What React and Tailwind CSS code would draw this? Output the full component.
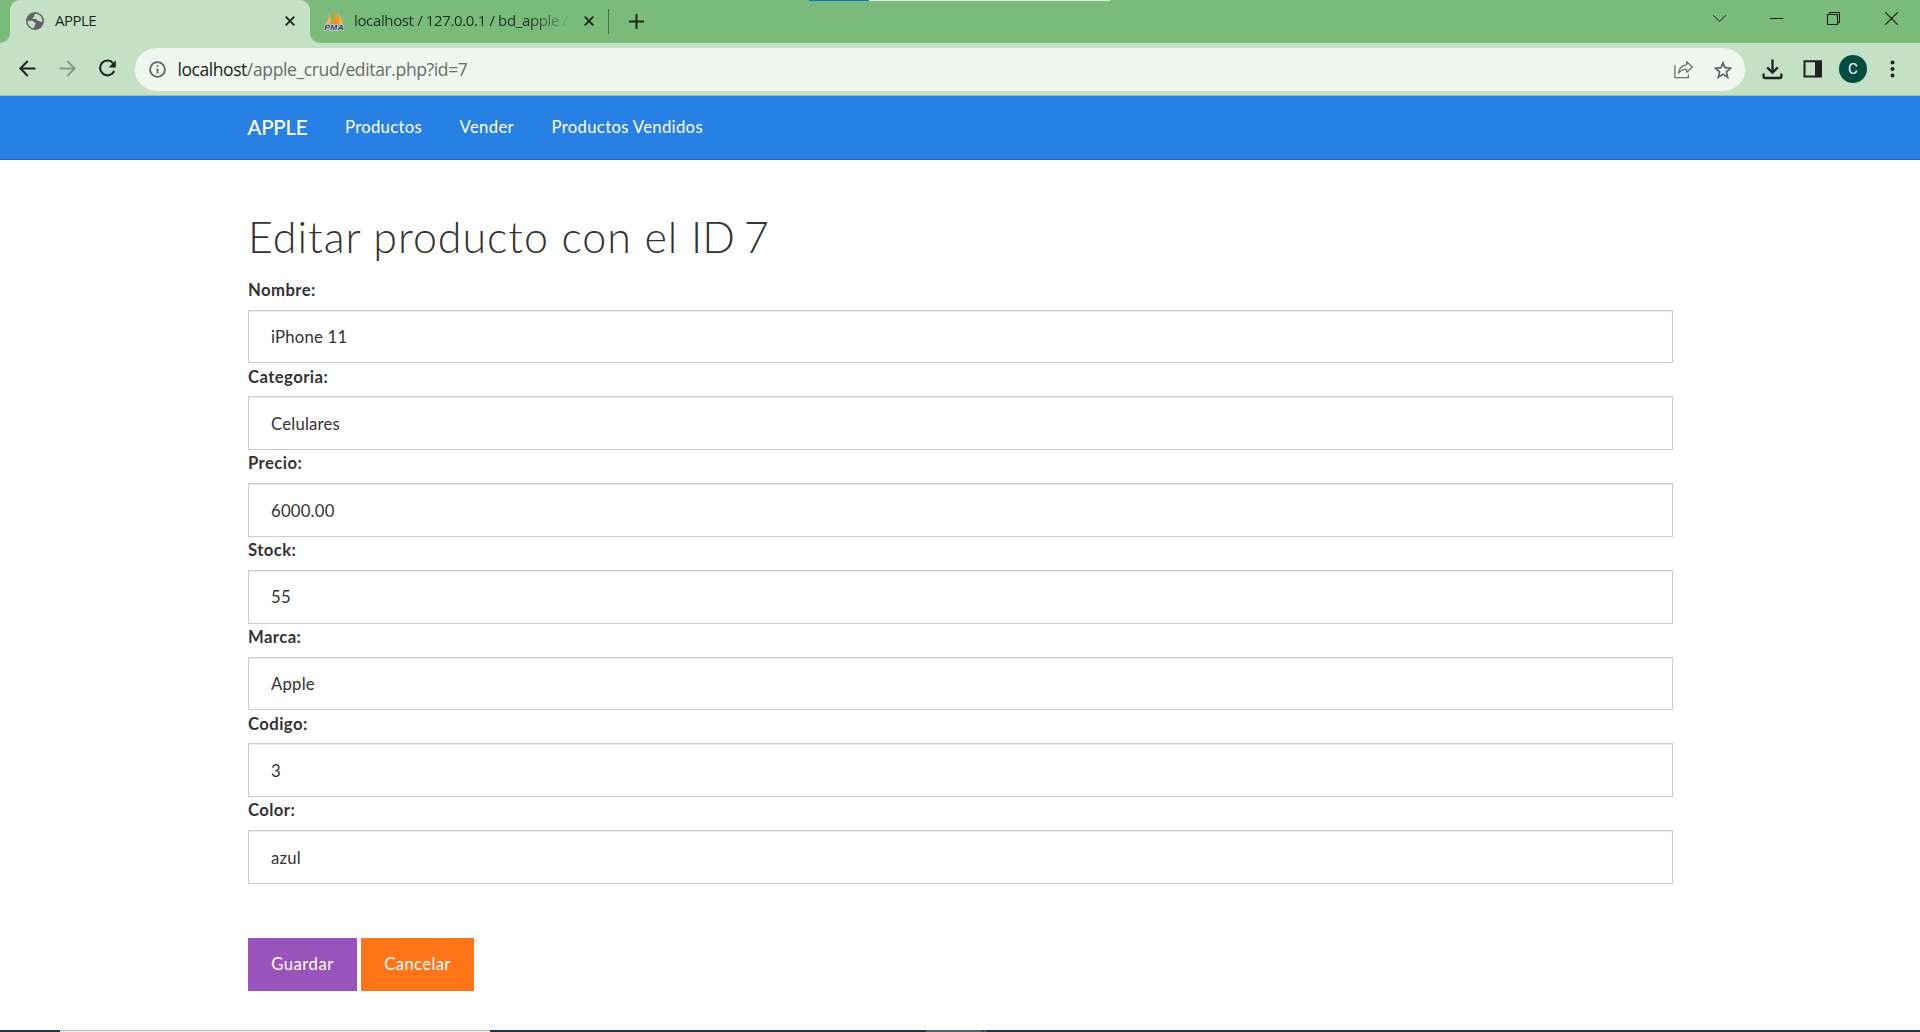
import React from 'react';

const fields = [
  ['Nombre:', 'iPhone 11'],
  ['Categoria:', 'Celulares'],
  ['Precio:', '6000.00'],
  ['Stock:', '55'],
  ['Marca:', 'Apple'],
  ['Codigo:', '3'],
  ['Color:', 'azul'],
];

function Globe() {
  return (
    <svg className="ml-[15px] size-[20px] shrink-0" viewBox="0 0 20 20">
      <circle cx="10" cy="10" r="9" fill="#5f6368" />
      <path
        d="M2.7 9.4 C4.5 9.8 6 9.6 7.6 9.8 C8.6 10.2 8.6 11.3 9.7 11.5 C11 11.8 11.2 12.6 10.2 13.4 C9.4 14 9.8 15.6 8.8 17.2 C5 16.6 2.4 13.4 2.7 9.4 Z"
        fill="#c5e1c5"
      />
      <path
        d="M11.4 2.8 C9.6 3.1 8.8 4 9.2 5.1 C9.5 5.9 8.7 6.3 8 6.6 C7.2 7 7.5 7.9 8.4 8 C10 8.2 11.2 7.7 11.9 8.8 C12.4 9.8 13.5 10.1 14.5 10 C15.5 10 15.6 11.4 17.2 11 C17.8 7 15.4 3.6 11.4 2.8 Z"
        fill="#c5e1c5"
      />
    </svg>
  );
}

function PmaLogo() {
  return (
    <svg className="size-[20px] shrink-0" viewBox="0 0 20 20">
      <path d="M1.3 13 Q5 9 5.4 1.8 Q7 8 6.4 13 Z" fill="#f7b35a" />
      <path d="M7.2 13 Q11 7 10.6 0.5 Q15 7 14.2 13 Z" fill="#f99417" />
      <path d="M14.8 13 Q15.4 7 13.6 2.6 Q18 7 19.2 13 Z" fill="#fbab48" />
      <text
        x="0.3"
        y="19"
        textLength="19.4"
        lengthAdjust="spacingAndGlyphs"
        fontFamily="Liberation Sans, sans-serif"
        fontWeight="bold"
        fontStyle="italic"
        fontSize="7.6"
        fill="#33346b"
        stroke="#dfe6e0"
        strokeWidth="1"
        paintOrder="stroke"
      >
        PMA
      </text>
    </svg>
  );
}

function CloseMark() {
  return (
    <svg className="size-[10px] shrink-0" viewBox="0 0 10 10" stroke="#1d2420" strokeWidth="1.9" fill="none">
      <path d="M0.7 0.7 L9.3 9.3 M9.3 0.7 L0.7 9.3" />
    </svg>
  );
}

function TabStrip() {
  return (
    <div className="relative flex h-[43px] shrink-0 bg-[#7abb7b]">
      <div className="w-[10px] bg-[#c5e1c5]">
        <div className="h-full rounded-br-[10px] bg-[#7abb7b]" />
      </div>
      <div className="flex w-[300px] items-center rounded-t-[10px] bg-[#c5e1c5] pb-px">
        <Globe />
        <span className="ml-[10px] pb-[2px] text-[15px] leading-5 tracking-[-0.5px] text-[#1d2420]">APPLE</span>
        <span className="mr-[15px] ml-auto flex">
          <CloseMark />
        </span>
      </div>
      <div className="w-[10px] bg-[#c5e1c5]">
        <div className="h-full rounded-bl-[10px] bg-[#7abb7b]" />
      </div>
      <div className="flex items-center pb-px pl-[4px]">
        <PmaLogo />
        <span className="ml-[10px] w-[216px] pb-[2px] text-[15px] leading-5 tracking-[-0.36px] whitespace-nowrap text-[#1d3020] [mask-image:linear-gradient(to_right,#000_175px,transparent_220px)]">
          localhost / 127.0.0.1 / bd_apple /
        </span>
        <span className="ml-[14px] flex">
          <CloseMark />
        </span>
        <span className="ml-[14px] h-[25px] w-px bg-[#4a6f4b]" />
        <svg className="ml-[20px] size-[15px]" viewBox="0 0 15 15" stroke="#18271a" strokeWidth="2">
          <path d="M7.5 0 V15 M0 7.5 H15" />
        </svg>
      </div>
      <div className="mr-[22px] ml-auto flex h-[37px] items-center text-[#0c130c]">
        <svg className="size-[13px]" viewBox="0 0 13 13" stroke="currentColor" fill="none" strokeWidth="1">
          <path d="M0.3 3.3 L6.5 9.5 L12.7 3.3" />
        </svg>
        <svg className="ml-[44px] size-[13px]" viewBox="0 0 13 13" stroke="currentColor" fill="none">
          <path d="M0 6.5 H13" />
        </svg>
        <svg className="ml-[44px] size-[13px]" viewBox="0 0 13 13" stroke="currentColor" fill="none">
          <path d="M0.5 2.5 H10.5 V12.5 H0.5 Z M2.5 2.5 V0.5 H12.5 V10.5 H10.5" />
        </svg>
        <svg className="ml-[45px] size-[13px]" viewBox="0 0 13 13" stroke="currentColor" fill="none" strokeWidth="1.1">
          <path d="M0.3 0.3 L12.7 12.7 M12.7 0.3 L0.3 12.7" />
        </svg>
      </div>
      <div className="absolute top-0 left-[809px] flex h-px w-[301px] bg-[#e6e6e6]">
        <div className="w-[60px] bg-[#0078d7]" />
      </div>
    </div>
  );
}

function Toolbar() {
  return (
    <div className="flex h-[53px] shrink-0 items-start border-b border-[#a5bfa6] bg-[#c5e1c5] pt-[5px]">
      <div className="flex h-[43px] items-center pb-[2px]">
        <svg className="ml-[19px] size-[17px]" viewBox="0 0 17 17" stroke="#202124" fill="none" strokeWidth="2">
          <path d="M16.5 8.5 H1.8 M8.7 1 L1.4 8.5 L8.7 16" />
        </svg>
        <svg className="ml-[23px] size-[17px]" viewBox="0 0 17 17" stroke="#869a87" fill="none" strokeWidth="2">
          <path d="M0.5 8.5 H15.2 M8.3 1 L15.6 8.5 L8.3 16" />
        </svg>
        <svg className="ml-[22px] size-[19px]" viewBox="0 0 19 19" fill="none">
          <path d="M15.2 4.3 A7.4 7.4 0 1 0 16.2 12" stroke="#202124" strokeWidth="2.1" />
          <path d="M17.8 1.2 V8.4 H10.6 Z" fill="#202124" />
        </svg>
      </div>
      <div className="ml-[18px] flex h-[43px] w-[1610px] items-center rounded-full bg-[#f0f7f0]">
        <svg className="ml-[14px] size-[17px]" viewBox="0 0 17 17" fill="none">
          <circle cx="8.5" cy="8.5" r="7.4" stroke="#5f6368" strokeWidth="1.8" />
          <path d="M8.5 7.4 V12.6 M8.5 4.3 V6.1" stroke="#5f6368" strokeWidth="1.8" />
        </svg>
        <span className="ml-[11.5px] pb-px text-[17.5px] leading-6 tracking-[-0.36px] text-[#676d68]">
          <span className="tracking-[-0.44px] text-[#202124]">localhost</span>/apple_crud/editar.php?id=7
        </span>
        <svg className="mr-[21px] ml-auto size-[19px]" viewBox="0 0 19 19" stroke="#6b706c" fill="none" strokeWidth="1.3">
          <path d="M0.9 5.2 V17.6 H14.4 V14.6" />
          <path d="M12.7 1.6 L18.3 7 L12.7 12.4 V9.4 C8.8 9.2 6.6 10.2 4.4 13 C5 8.6 7.6 5.2 12.7 4.8 Z" strokeLinejoin="round" />
        </svg>
        <svg className="mr-[13.5px] size-[18px]" viewBox="0 0 18 18" stroke="#5f6368" fill="none" strokeWidth="1.7">
          <path d="M9 1.9 L11 6.7 L16.6 7.2 L12.4 10.8 L13.7 16.3 L9 13.3 L4.3 16.3 L5.6 10.8 L1.4 7.2 L7 6.7 Z" />
        </svg>
      </div>
      <div className="flex h-[43px] items-center pb-px">
        <svg className="ml-[17px] size-[21px]" viewBox="0 0 21 21" fill="none" stroke="#202124" strokeWidth="2.3">
          <path d="M10.5 0.5 V13 M5.2 8.4 L10.5 13.7 L15.8 8.4" />
          <path d="M1.6 14.6 V17.6 Q1.6 19 3 19 H18 Q19.4 19 19.4 17.6 V14.6" />
        </svg>
        <svg className="ml-[20px] size-[20px]" viewBox="0 0 20 20">
          <path d="M1.5 2.2 H18 V17.6 H1.5 Z" fill="none" stroke="#202124" strokeWidth="2" />
          <path d="M12 2 H18 V18 H12 Z" fill="#202124" />
        </svg>
        <div className="ml-[16px] flex size-[28px] items-center justify-center rounded-full bg-[#004d40] font-['Roboto',sans-serif] text-[15px] leading-none text-white">
          C
        </div>
        <svg className="ml-[23px] h-[18px] w-[5px]" viewBox="0 0 5 18" fill="#202124">
          <circle cx="2.5" cy="2.5" r="2" />
          <circle cx="2.5" cy="9" r="2" />
          <circle cx="2.5" cy="15.5" r="2" />
        </svg>
      </div>
    </div>
  );
}

function Navbar() {
  return (
    <nav className="flex h-16 shrink-0 items-center border-b border-[#1967be] bg-[#2780e3] pb-px pl-[247.5px] text-[16.7px] leading-6 text-white">
      <a className="w-[97.5px] text-[20.5px] tracking-[-0.2px] [-webkit-text-stroke:0.2px_#fff]">APPLE</a>
      <a className="w-[114.5px] pb-px tracking-[0.3px]">Productos</a>
      <a className="w-[92px] pb-px tracking-[0.35px]">Vender</a>
      <a className="pb-px tracking-[0.33px]">Productos Vendidos</a>
    </nav>
  );
}

export default function App() {
  return (
    <div className="flex h-[1032px] w-[1920px] flex-col overflow-hidden bg-white font-['Open_Sans',sans-serif]">
      <TabStrip />
      <Toolbar />
      <div className="flex min-h-0 flex-1 flex-col font-['Lato',sans-serif] text-[16.7px] text-[#333333]">
        <Navbar />
        <main className="mt-[49px] ml-[248px] w-[1425px]">
          <h1 className="mb-[11.5px] h-14 text-[43px] leading-[56px] font-light tracking-[0.95px]">
            Editar producto con el <span className="tracking-[0.2px] [word-spacing:-3px]">ID 7</span>
          </h1>
          {fields.map(([label, value]) => (
            <div key={label} className="flex h-[86.75px] flex-col">
              <label className="h-[33.1px] pt-[0.4px] leading-[26px] font-bold tracking-[0.42px]">{label}</label>
              <input
                defaultValue={value}
                className="min-h-0 flex-1 border border-[#cccccc] px-[22px] pt-[2.6px] tracking-[0.22px] text-[#333333] shadow-[inset_0_1px_1px_rgba(0,0,0,0.075)]"
              />
            </div>
          ))}
          <div className="mt-[54.25px] flex h-[53px] gap-1 text-white">
            <button className="w-[109px] bg-[#9954bb] tracking-[0.5px]">Guardar</button>
            <button className="w-[113px] bg-[#ff7518] tracking-[0.35px]">Cancelar</button>
          </div>
        </main>
      </div>
      <div className="flex h-[2px] shrink-0 bg-[#1e3444]">
        <div className="w-[60px] bg-[#203840]" />
        <div className="w-[430px] border-t border-[#bdbdbd] bg-[#f3f3f3]" />
        <div className="ml-[436px] w-[56px] bg-[#4d6168]" />
        <div className="ml-px w-[4px] bg-[#45525c]" />
      </div>
    </div>
  );
}
